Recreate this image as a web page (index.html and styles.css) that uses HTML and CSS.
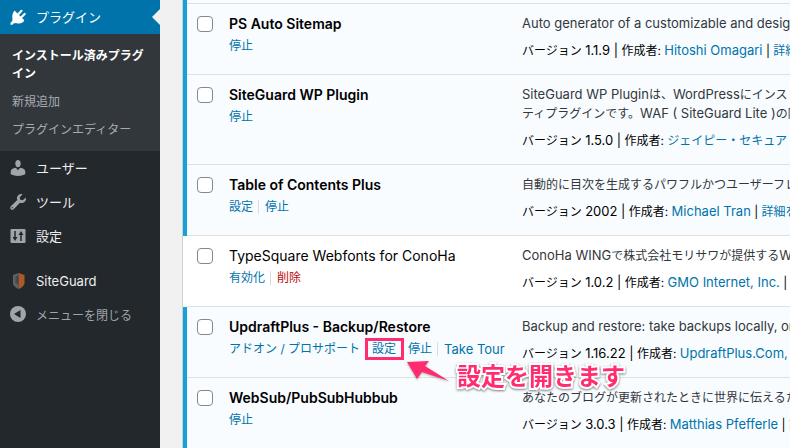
FILE: index.html
```
<!DOCTYPE html>
<html lang="ja">

<head>
  <meta charset="utf-8" />
  <title>プラグイン</title>
  <link rel="stylesheet" href="styles.css">
</head>

<body>
  <div class="admin">
    <nav class="sidebar">
      <a class="menu-item current" href="#">
        <svg class="icon" viewBox="0 0 20 20">
          <path d="M6.500 3.500L16.300 13.300 15.300 15Q11.500 17.500 8 16L5.500 16.500 4.500 17.800H2.500V15.800L4.300 14 4.500 12Q3.500 7.500 6.500 3.500z" fill="currentColor" />
          <path d="M10.300 7.300L13.500 3.800M13.300 10.300L16.700 7" fill="none" stroke="currentColor" stroke-width="2.200" stroke-linecap="round" />
        </svg>
        プラグイン
      </a>
      <ul class="submenu">
        <li><a class="active" href="#">インストール済みプラグイン</a></li>
        <li><a href="#">新規追加</a></li>
        <li><a href="#">プラグインエディター</a></li>
      </ul>
      <a class="menu-item" href="#">
        <svg class="icon" viewBox="0 0 20 20">
          <path d="M10 9.300C8.400 9.300 7.300 7.500 7.300 5.500 7.300 3.300 8.400 2 10 2s2.700 1.300 2.700 3.500c0 2-1.100 3.800-2.700 3.800zM7 9.800Q8.400 9.500 10 12.300 11.600 9.500 13 9.800 17.300 10.800 17.300 14v2.300Q14 18 10 18T2.700 16.300V14Q2.700 10.800 7 9.800z" fill="currentColor" />
        </svg>
        ユーザー
      </a>
      <a class="menu-item" href="#">
        <svg class="icon" viewBox="0 0 20 20">
          <path d="M16.700 9.800c-1.300 1.300-3.200 1.600-4.800.9l-6.200 6.500c-.8.800-2.100.8-2.900 0s-.8-2.100 0-2.900L9.300 8.100c-.7-1.600-.4-3.500.9-4.800 1.200-1.200 2.900-1.500 4.400-1L11.700 5.200l.5 2.600 2.600.5 2.900-2.900c.5 1.500.2 3.200-1 4.400zM4.300 16.400c.4 0 .7-.3.700-.7s-.3-.7-.7-.7-.7.3-.7.700.3.700.7.700z" fill="currentColor" fill-rule="evenodd" />
        </svg>
        ツール
      </a>
      <a class="menu-item" href="#">
        <svg class="icon" viewBox="0 0 20 20">
          <rect x="2.500" y="3" width="15" height="14" rx="1" fill="currentColor" />
          <path d="M7 5v6M13 9v6" fill="none" stroke="#23282d" stroke-width="1.500" />
          <path d="M4.500 11h5L7 15zM10.500 9h5L13 5z" fill="#23282d" />
        </svg>
        設定
      </a>
      <a class="menu-item separated" href="#">
        <svg class="icon" viewBox="0 0 20 20">
          <path d="M10.800 2L5 4v9q1.500 3.500 5.800 5z" fill="#5d6267" />
          <path d="M7.500 5.500L10.800 4v10l-3.300-2z" fill="#41474c" />
          <path d="M10.800 2l5.700 2v9q-1.500 3.500-5.700 5z" fill="#ad5827" />
        </svg>
        SiteGuard
      </a>
      <button class="menu-item collapse" type="button">
        <svg class="icon" viewBox="0 0 20 20">
          <circle cx="10" cy="10" r="8" fill="currentColor" />
          <path d="M12.500 6v8L6 10z" fill="#23282d" />
        </svg>
        メニューを閉じる
      </button>
    </nav>

    <main class="content">
      <table class="plugins">
        <tbody>
          <tr class="active tail">
            <td class="check"></td>
            <td class="name"></td>
            <td class="desc"></td>
          </tr>
          <tr class="active">
            <td class="check"><input type="checkbox" aria-label="PS Auto Sitemap"></td>
            <td class="name">
              <strong>PS Auto Sitemap</strong>
              <div class="actions"><a href="#">停止</a></div>
            </td>
            <td class="desc">
              <p class="latin">Auto generator of a customizable and designed sitemap page.</p>
              <p class="meta">バージョン <span class="latin">1.1.9 |</span> 作成者: <a class="latin" href="#">Hitoshi Omagari</a> | <a href="#">詳細を表示</a></p>
            </td>
          </tr>
          <tr class="active">
            <td class="check"><input type="checkbox" aria-label="SiteGuard WP Plugin"></td>
            <td class="name">
              <strong>SiteGuard WP Plugin</strong>
              <div class="actions"><a href="#">停止</a></div>
            </td>
            <td class="desc">
              <p><span class="latin">SiteGuard WP Plugin</span>は、<span class="latin">WordPress</span>にインストールするセキュリ<br>ティプラグインです。<span class="latin">WAF ( SiteGuard Lite )</span>の除外設定</p>
              <p class="meta">バージョン <span class="latin">1.5.0 |</span> 作成者: <a href="#">ジェイピー・セキュア</a> | <a href="#">詳細を表示</a></p>
            </td>
          </tr>
          <tr class="active">
            <td class="check"><input type="checkbox" aria-label="Table of Contents Plus"></td>
            <td class="name">
              <strong>Table of Contents Plus</strong>
              <div class="actions"><a href="#">設定</a><a href="#">停止</a></div>
            </td>
            <td class="desc">
              <p>自動的に目次を生成するパワフルかつユーザーフレンドリーなプラグイン</p>
              <p class="meta">バージョン <span class="latin">2002 |</span> 作成者: <a class="latin" href="#">Michael Tran</a> | <a href="#">詳細を表示</a></p>
            </td>
          </tr>
          <tr>
            <td class="check"><input type="checkbox" aria-label="TypeSquare Webfonts for ConoHa"></td>
            <td class="name">
              <strong>TypeSquare Webfonts for ConoHa</strong>
              <div class="actions"><a href="#">有効化</a><a class="delete" href="#">削除</a></div>
            </td>
            <td class="desc">
              <p><span class="latin">ConoHa WING</span>で株式会社モリサワが提供する<span class="latin">Web</span>フォント</p>
              <p class="meta">バージョン <span class="latin">1.0.2 |</span> 作成者: <a class="latin" href="#">GMO Internet, Inc.</a> | <a href="#">詳細を表示</a></p>
            </td>
          </tr>
          <tr class="active">
            <td class="check"><input type="checkbox" aria-label="UpdraftPlus - Backup/Restore"></td>
            <td class="name">
              <strong>UpdraftPlus - Backup/Restore</strong>
              <div class="actions">
                <a href="#">アドオン / プロサポート</a><span class="marked"><a href="#">設定</a>
                  <span class="callout">
                    <svg class="arrow" viewBox="0 0 46 24">
                      <path d="M2 2L24 1 20 6 44 21 17 12 12 19Z" />
                    </svg>
                    <span class="callout-text">設定を開きます</span>
                  </span></span><a href="#">停止</a><a class="latin" href="#">Take Tour</a>
              </div>
            </td>
            <td class="desc">
              <p class="latin">Backup and restore: take backups locally, or backup to the cloud.</p>
              <p class="meta">バージョン <span class="latin">1.16.22 |</span> 作成者: <a class="latin" href="#">UpdraftPlus.Com, DavidAnderson</a></p>
            </td>
          </tr>
          <tr class="active">
            <td class="check"><input type="checkbox" aria-label="WebSub/PubSubHubbub"></td>
            <td class="name">
              <strong>WebSub/PubSubHubbub</strong>
              <div class="actions"><a href="#">停止</a></div>
            </td>
            <td class="desc">
              <p>あなたのブログが更新されたときに世界に伝えるためのプラグイン</p>
              <p class="meta">バージョン <span class="latin">3.0.3 |</span> 作成者: <a class="latin" href="#">Matthias Pfefferle</a> | <a href="#">詳細を表示</a></p>
            </td>
          </tr>
        </tbody>
      </table>
    </main>
  </div>
</body>

</html>
```
FILE: styles.css
```
* {
  margin: 0;
  padding: 0;
  box-sizing: border-box;
}

body {
  font-family: "Inter", "Noto Sans CJK JP", sans-serif;
  font-size: 12px;
  line-height: 19px;
  color: #000;
  background-color: #f1f1f1;
  overflow: hidden;
}

a {
  color: #0073aa;
  text-decoration: none;
}

.latin {
  font-size: 13px;
}

.admin {
  display: flex;
  height: 100vh;
}

/* sidebar */

.sidebar {
  flex: 0 0 160px;
  background-color: #23282d;
}

.menu-item {
  display: flex;
  align-items: center;
  gap: 8px;
  position: relative;
  width: 100%;
  height: 34px;
  padding-left: 8px;
  font-size: 13px;
  color: #eee;
}

.icon {
  width: 20px;
  height: 20px;
  color: #a0a5aa;
}

.menu-item.current {
  color: #fff;
  background-color: #0073aa;
}

.menu-item.current .icon {
  color: #fff;
}

.menu-item.current::after {
  content: "";
  position: absolute;
  right: 0;
  top: 9px;
  border: 8px solid transparent;
  border-left: 0;
  border-right-color: #f1f1f1;
}

.separated {
  margin-top: 11px;
}

.collapse {
  height: 32px;
  border: 0;
  background: none;
  font-family: inherit;
  font-size: 12px;
  color: #a0a5aa;
}

.submenu {
  list-style: none;
  padding: 8px 12px 7px;
  line-height: 18px;
  background-color: #32373c;
}

.submenu a {
  display: block;
  padding: 5px 0;
  margin-right: -4px;
  color: #a6abb0;
}

.submenu .active {
  font-weight: 600;
  color: #fff;
}

/* plugin list */

.content {
  flex: 1;
  min-width: 0;
  padding-left: 22px;
  overflow: hidden;
}

.plugins {
  width: 100%;
  border-collapse: separate;
  border-spacing: 0;
  border-left: 1px solid #ccd0d4;
  background-color: #fff;
  white-space: nowrap;
}

.plugins td {
  padding: 10px 0 15px;
  vertical-align: top;
  box-shadow: inset 0 -1px 0 #dbe1e5;
}

.plugins .tail td {
  height: 4px;
  padding: 0;
}

.plugins .active td {
  background-color: #f8fcff;
}

.plugins .check {
  width: 46px;
  min-width: 46px;
  padding-left: 10px;
  border-left: 4px solid #fff;
}

.plugins .active .check {
  border-left-color: #17a2d6;
}

.plugins .name {
  width: 293px;
  min-width: 293px;
}

.check input {
  display: block;
  appearance: none;
  width: 16px;
  height: 16px;
  margin-top: 2px;
  border: 1px solid #7e8993;
  border-radius: 4px;
  background-color: #fff;
}

.name strong {
  display: block;
  font-size: 14px;
  font-weight: 400;
}

.active .name strong {
  font-weight: 600;
}

.actions {
  display: flex;
  align-items: center;
  padding-top: 6px;
  line-height: 14px;
}

.actions > * + * {
  margin-left: 5px;
  padding-left: 6px;
  border-left: 1px solid #ddd;
}

.actions .delete {
  color: #bc0b0b;
}

.desc p {
  color: #32373c;
}

.desc .meta {
  margin-top: 8px;
  color: #000;
}

/* annotation over the settings link */

.marked {
  position: relative;
}

.marked::after {
  content: "";
  position: absolute;
  inset: -4px -8px -4px -1px;
  border: 3px solid #ff2d6f;
  pointer-events: none;
}

.callout {
  display: flex;
  align-items: flex-start;
  gap: 6px;
  position: absolute;
  left: 39px;
  top: 18px;
  z-index: 1;
}

.arrow {
  width: 46px;
  height: 24px;
  fill: #ff2d6f;
  overflow: visible;
  filter: drop-shadow(0 1px 1px rgba(0, 0, 0, 0.3));
}

.callout-text {
  font-size: 24px;
  font-weight: 700;
  line-height: 34px;
  color: #ff2d6f;
  -webkit-text-stroke: 4px #fff;
  paint-order: stroke fill;
  filter: drop-shadow(0 1px 1px rgba(0, 0, 0, 0.5));
}
```
